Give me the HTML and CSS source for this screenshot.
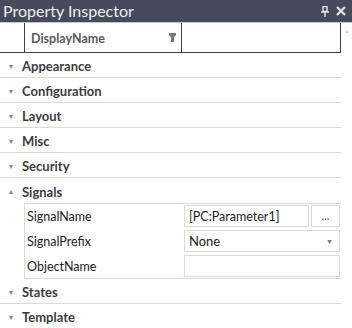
FILE: index.html
```html
<!DOCTYPE html>
<html lang="en">
<head>
  <meta charset="UTF-8" />
  <title>Property Inspector</title>
  <link rel="stylesheet" href="styles.css">
</head>
<body>
  <div class="panel">

    <div class="titlebar">
      <span class="title">Property Inspector</span>
      <svg class="pin" width="8" height="11" viewBox="0 0 8 11">
        <path d="M2 0.5h4v5h-4z M0 6h8 M4 6v5" fill="none" stroke="#e4e4e8" stroke-width="1.4"/>
      </svg>
      <svg class="close" width="10" height="10" viewBox="0 0 10 10">
        <path d="M1 1L9 9M9 1L1 9" stroke="#e4e4e8" stroke-width="2.2"/>
      </svg>
    </div>

    <div class="body">
      <div class="grid">
        <div class="grid-header">
          <div class="hdr-gutter"></div>
          <div class="hdr-name">
            <span>DisplayName</span>
            <svg width="7" height="9" viewBox="0 0 7 9">
              <path d="M0 0h7v2l-2 2v5h-3v-5l-2-2z" fill="#777"/>
            </svg>
          </div>
          <div class="hdr-value"></div>
        </div>

        <div class="category"><span class="arrow">&#9660;</span>Appearance</div>
        <div class="category"><span class="arrow">&#9660;</span>Configuration</div>
        <div class="category"><span class="arrow">&#9660;</span>Layout</div>
        <div class="category"><span class="arrow">&#9660;</span>Misc</div>
        <div class="category"><span class="arrow">&#9660;</span>Security</div>
        <div class="category open"><span class="arrow">&#9650;</span>Signals</div>

        <div class="props">
          <div class="prop">
            <div class="prop-name">SignalName</div>
            <div class="prop-value">
              <div class="textbox">[PC:Parameter1]</div>
              <div class="dots">...</div>
            </div>
          </div>
          <div class="prop">
            <div class="prop-name">SignalPrefix</div>
            <div class="prop-value">
              <div class="combo">None<span class="combo-arrow">&#9660;</span></div>
            </div>
          </div>
          <div class="prop">
            <div class="prop-name">ObjectName</div>
            <div class="prop-value">
              <div class="textbox empty"></div>
            </div>
          </div>
        </div>

        <div class="category"><span class="arrow">&#9660;</span>States</div>
        <div class="category last"><span class="arrow">&#9660;</span>Template</div>
      </div>

      <div class="scroll"><span class="scroll-up">&#9650;</span></div>
    </div>

  </div>
</body>
</html>
```

FILE: styles.css
```css
/* Panel */
body {
  margin: 0;
  background: #ffffff;
  font-family: Lato, "Liberation Sans", sans-serif;
}

.panel {
  width: 352px;
  height: 328px;
  overflow: hidden;
  background: #ffffff;
}

/* Barra de título */
.titlebar {
  height: 22px;
  background: #464a5c;
  border-bottom: 1px solid #c9c9cc;
  display: flex;
  align-items: center;
  padding: 0 6px 0 3px;
}

.title {
  flex: 1;
  color: #f0f0f2;
  font-size: 16px;
  line-height: 22px;
}

.pin {
  margin-right: 7px;
}

/* Rejilla */
.body {
  display: flex;
}

.grid {
  width: 341px;
}

.scroll {
  flex: 1;
  display: flex;
  justify-content: center;
}

.scroll-up {
  color: #d6d6d6;
  font-size: 6px;
  margin-top: 4px;
  margin-left: 1px;
}

.grid-header {
  height: 29px;
  display: flex;
  border-bottom: 1px solid #3d3f4c;
  border-right: 1px solid #3d3f4c;
}

.hdr-gutter {
  width: 24px;
  border-right: 1px solid #3d3f4c;
}

.hdr-name {
  width: 157px;
  border-right: 1px solid #3d3f4c;
  display: flex;
  align-items: center;
  justify-content: space-between;
  padding: 1px 5px 0 6px;
  box-sizing: border-box;
  font-size: 12.5px;
  font-weight: bold;
  color: #5a5a5a;
}

.hdr-name svg {
  margin-bottom: 2px;
}

.hdr-value {
  flex: 1;
}

.category {
  height: 24px;
  padding-top: 2px;
  box-sizing: content-box;
  height: 22px;
  border-bottom: 1px solid #dedcd0;
  display: flex;
  align-items: center;
  font-size: 13px;
  font-weight: bold;
  color: #3c3c3c;
}

.category.open {
  height: 23px;
  border-bottom: none;
}

.category.last {
  border-bottom: none;
}

.arrow {
  width: 22px;
  text-align: center;
  font-size: 7px;
  color: #8a8a8a;
  margin-bottom: 1px;
}

.props {
  margin-left: 24px;
  border-top: 1px solid #dedcd0;
  border-left: 1px solid #dedcd0;
  border-bottom: 1px solid #dedcd0;
}

.prop {
  height: 25px;
  display: flex;
  align-items: center;
}

.prop:first-child {
  height: 24px;
}

.prop-name {
  width: 157px;
  padding: 1px 0 0 2px;
  font-size: 12.5px;
  color: #222222;
}

.prop-value {
  flex: 1;
  display: flex;
  gap: 2px;
  padding-right: 1px;
}

.textbox {
  flex: 1;
  height: 20px;
  border: 1px solid #dedcd0;
  font-size: 12.5px;
  color: #222222;
  line-height: 21px;
  padding-left: 4px;
}

.textbox:not(.empty) {
  border-right-color: #d6d8de;
}

.dots {
  width: 27px;
  height: 20px;
  border: 1px solid #dedcd0;
  font-size: 11px;
  line-height: 20px;
  text-align: center;
  color: #444444;
}

.combo {
  flex: 1;
  height: 20px;
  border: 1px solid #dedcd0;
  display: flex;
  align-items: center;
  justify-content: space-between;
  padding: 1px 6px 0 4px;
  box-sizing: content-box;
  height: 19px;
  font-size: 13px;
  color: #222222;
}

.combo-arrow {
  font-size: 7px;
  color: #777777;
}
```
